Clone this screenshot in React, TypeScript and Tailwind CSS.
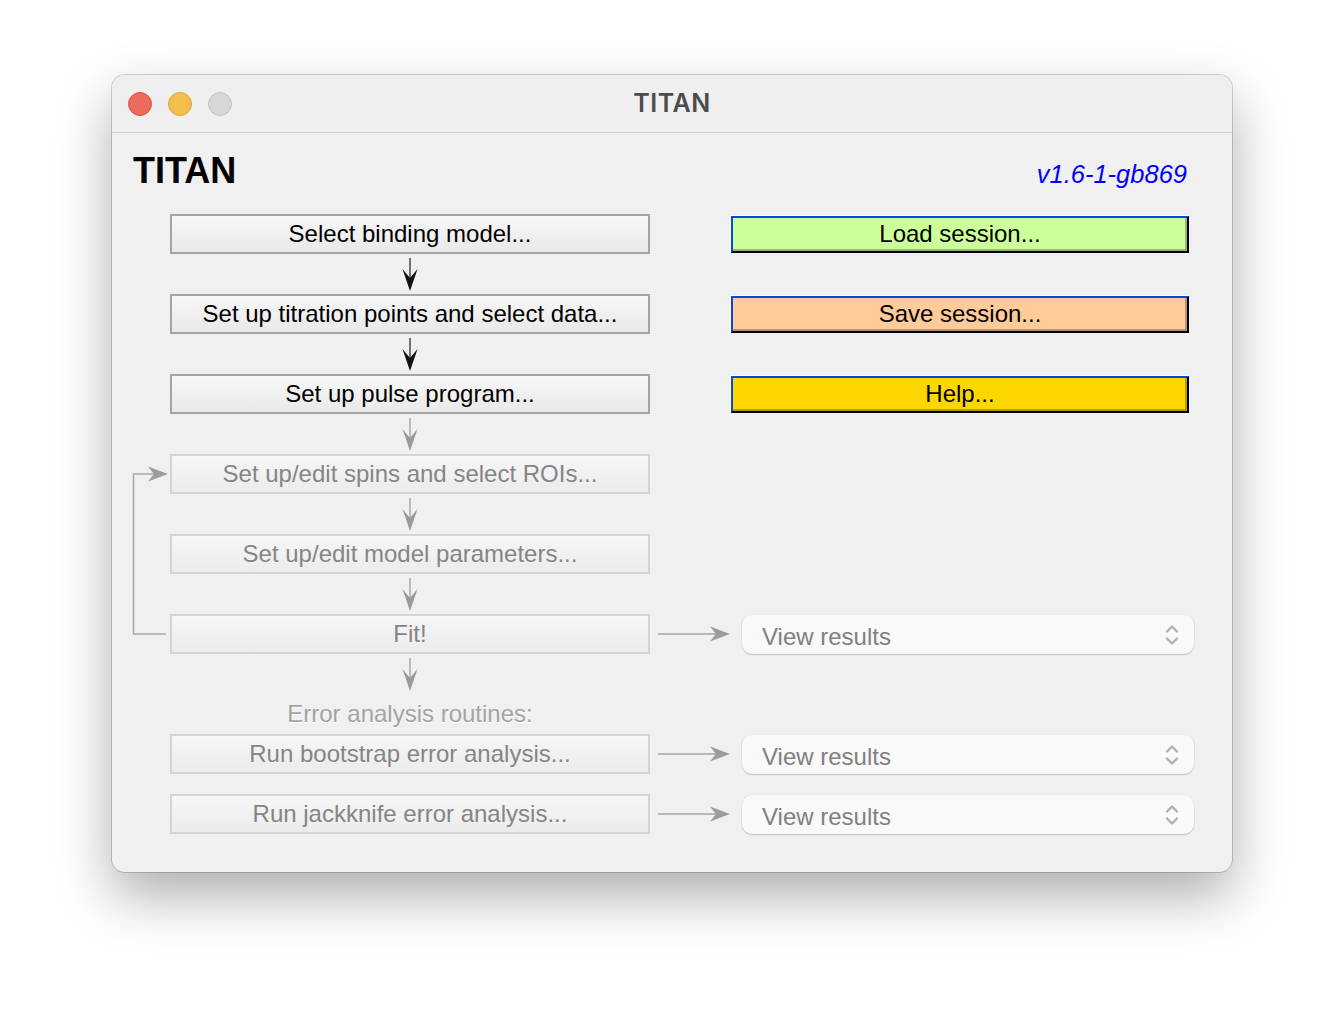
import React from "react";

function DownArrow({ dark }: { dark?: boolean }) {
  const head = dark ? "#111111" : "#9a9a9a";
  const line = dark ? "#3a3a3a" : "#a4a4a4";
  return (
    <div className="h-[40px] w-[480px] flex justify-center">
      <svg width="20" height="40" viewBox="0 0 20 40">
        <line x1="10" y1="4" x2="10" y2="30" stroke={line} strokeWidth="1.4" />
        <polygon points="2.5,15 10,37 17.5,15 10,24" fill={head} />
      </svg>
    </div>
  );
}

function RightArrow() {
  return (
    <svg width="80" height="40" viewBox="0 0 80 40">
      <line x1="8" y1="20" x2="70" y2="20" stroke="#a6a6a6" strokeWidth="1.4" />
      <polygon points="60,12.5 80,20 60,27.5 66,20" fill="#9c9c9c" />
    </svg>
  );
}

function FlowButton({ label, disabled }: { label: string; disabled?: boolean }) {
  return (
    <div
      className={
        disabled
          ? "h-[40px] w-[480px] flex items-center justify-center border-2 border-[#d4d4d4] bg-linear-to-b from-[#f6f6f6] to-[#ececec] text-[24px] text-[#858585]"
          : "h-[40px] w-[480px] flex items-center justify-center border-2 border-[#a4a4a4] bg-linear-to-b from-[#f7f7f7] to-[#e9e9e9] text-[24px] text-black"
      }
    >
      {label}
    </div>
  );
}

function ColorButton({ label, bg }: { label: string; bg: string }) {
  return (
    <div
      className={
        "ml-[1px] mt-[2px] h-[37px] w-[458px] flex items-center justify-center pb-[1px] text-[24px] text-black border-2 border-t-[#0a43e6] border-l-[#0a43e6] border-r-black border-b-black shadow-[-1px_-1px_0_0_#ffffff,inset_-2px_-2px_0_0_rgba(0,0,0,0.28)] " +
        bg
      }
    >
      {label}
    </div>
  );
}

function Dropdown() {
  return (
    <div className="ml-[12px] mt-[1px] h-[39px] w-[452px] rounded-[10px] bg-[#f9f9f9] shadow-[0_1px_1.5px_rgba(0,0,0,0.18),0_0_0_0.5px_rgba(0,0,0,0.05)] flex items-center justify-between pl-[20px] pr-[15px]">
      <span className="text-[24px] text-[#808080] pt-[5px]">View results</span>
      <svg width="14" height="26" viewBox="0 0 14 26">
        <path d="M2 9.5 L7 4.5 L12 9.5" fill="none" stroke="#b0b0b0" strokeWidth="2.4" strokeLinecap="round" strokeLinejoin="round" />
        <path d="M2 16.5 L7 21.5 L12 16.5" fill="none" stroke="#b0b0b0" strokeWidth="2.4" strokeLinecap="round" strokeLinejoin="round" />
      </svg>
    </div>
  );
}

export default function App() {
  return (
    <div className="w-[1344px] h-[1020px] bg-white pt-[75px] font-['Liberation_Sans',Arial,sans-serif]">
      <div className="mx-auto w-[1120px] h-[797px] rounded-[13px] bg-[#f0f0f0] overflow-hidden shadow-[0_24px_55px_rgba(0,0,0,0.32),0_0_0_1px_rgba(0,0,0,0.17)]">
        {/* Title bar */}
        <div className="relative h-[58px] border-b border-[#d3d3d3] bg-[#efefef] flex items-center pl-[16px] gap-[16px]">
          <div className="w-[24px] h-[24px] rounded-full bg-[#ef6a5e] border border-[#d8554a]" />
          <div className="w-[24px] h-[24px] rounded-full bg-[#f5bf4f] border border-[#dda63a]" />
          <div className="w-[24px] h-[24px] rounded-full bg-[#d7d7d7] border border-[#c3c3c3]" />
          <div className="absolute inset-0 flex items-center justify-center pointer-events-none">
            <span className="font-['Inter',sans-serif] font-semibold text-[25px] text-[#4b4b4b] tracking-[0.5px]">TITAN</span>
          </div>
        </div>

        {/* Heading */}
        <div className="flex items-baseline justify-between pl-[21px] pr-[45px] pt-[18px] h-[81px]">
          <span className="text-[36px] leading-[40px] font-bold text-black">TITAN</span>
          <span className="text-[25.5px] italic text-[#0000ff]">v1.6-1-gb869</span>
        </div>

        {/* Main flow */}
        <div className="relative ml-[58px] flex flex-col">
          <svg className="absolute left-[-38px] top-[250px]" width="42" height="180" viewBox="0 0 42 180">
            <polyline points="34,10 1.5,10 1.5,170 34,170" fill="none" stroke="#a8a8a8" strokeWidth="1.5" />
            <polygon points="16,2.5 36,10 16,17.5 22,10" fill="#9c9c9c" />
          </svg>

          <div className="flex h-[40px]">
            <FlowButton label="Select binding model..." />
            <div className="w-[80px]" />
            <ColorButton label="Load session..." bg="bg-[#ccff99]" />
          </div>
          <DownArrow dark />
          <div className="flex h-[40px]">
            <FlowButton label="Set up titration points and select data..." />
            <div className="w-[80px]" />
            <ColorButton label="Save session..." bg="bg-[#ffcc99]" />
          </div>
          <DownArrow dark />
          <div className="flex h-[40px]">
            <FlowButton label="Set up pulse program..." />
            <div className="w-[80px]" />
            <ColorButton label="Help..." bg="bg-[#ffd700]" />
          </div>
          <DownArrow />
          <div className="flex h-[40px]">
            <FlowButton label="Set up/edit spins and select ROIs..." disabled />
          </div>
          <DownArrow />
          <div className="flex h-[40px]">
            <FlowButton label="Set up/edit model parameters..." disabled />
          </div>
          <DownArrow />
          <div className="flex h-[40px]">
            <FlowButton label="Fit!" disabled />
            <RightArrow />
            <Dropdown />
          </div>
          <DownArrow />
          <div className="h-[40px] w-[480px] flex items-center justify-center text-[24px] text-[#a3a3a3] [text-shadow:0_1px_0_#ffffff]">
            Error analysis routines:
          </div>
          <div className="flex h-[40px]">
            <FlowButton label="Run bootstrap error analysis..." disabled />
            <RightArrow />
            <Dropdown />
          </div>
          <div className="h-[20px]" />
          <div className="flex h-[40px]">
            <FlowButton label="Run jackknife error analysis..." disabled />
            <RightArrow />
            <Dropdown />
          </div>
        </div>
      </div>
    </div>
  );
}
